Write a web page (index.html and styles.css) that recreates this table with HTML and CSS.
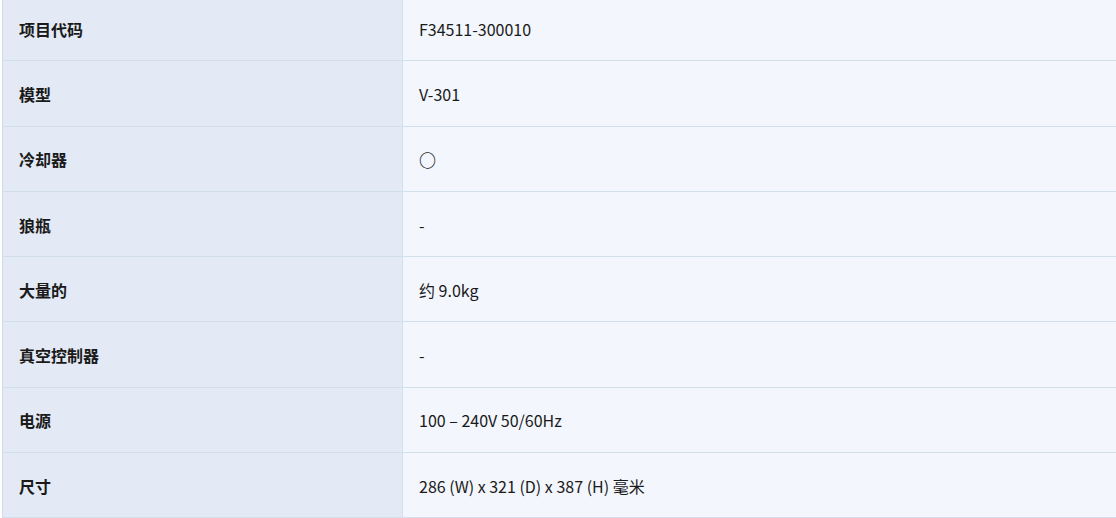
FILE: index.html
```html
<!DOCTYPE html>
<html lang="zh-CN">
<head>
    <meta charset="UTF-8">
    <meta name="viewport" content="width=device-width, initial-scale=1.0">
    <title>规格</title>
    <link rel="stylesheet" href="styles.css">
</head>
<body>

    <table class="spec-table">
        <tr>
            <th>项目代码</th>
            <td>F34511-300010</td>
        </tr>
        <tr>
            <th>模型</th>
            <td>V-301</td>
        </tr>
        <tr>
            <th>冷却器</th>
            <td><span class="mark">○</span></td>
        </tr>
        <tr>
            <th>狼瓶</th>
            <td>-</td>
        </tr>
        <tr>
            <th>大量的</th>
            <td>约 9.0kg</td>
        </tr>
        <tr>
            <th>真空控制器</th>
            <td>-</td>
        </tr>
        <tr>
            <th>电源</th>
            <td>100 – 240V 50/60Hz</td>
        </tr>
        <tr>
            <th>尺寸</th>
            <td>286 (W) x 321 (D) x 387 (H) 毫米</td>
        </tr>
    </table>

</body>
</html>
```

FILE: styles.css
```css
body {
    margin: 0;
    background: #ffffff;
    font-family: "Noto Sans CJK SC", "Noto Sans", sans-serif;
    overflow: hidden;
}
.spec-table {
    margin: -4px 0 0 2px;
    width: 1114px;
    border-collapse: collapse;
    border-left: 1px solid #cfdcec;
    font-size: 16px;
    color: #1a1a1a;
}
.spec-table th,
.spec-table td {
    height: 63.3px;
    padding: 1px 16px 0;
    border-bottom: 1px solid #d3deeb;
    text-align: left;
    vertical-align: middle;
}
.spec-table th {
    width: 367px;
    background: #e3eaf5;
    font-weight: bold;
    border-right: 1px solid #d3deeb;
}
.spec-table td {
    background: #f3f6fd;
    font-weight: normal;
}
.mark {
    font-size: 17px;
    font-weight: bold;
}
```
